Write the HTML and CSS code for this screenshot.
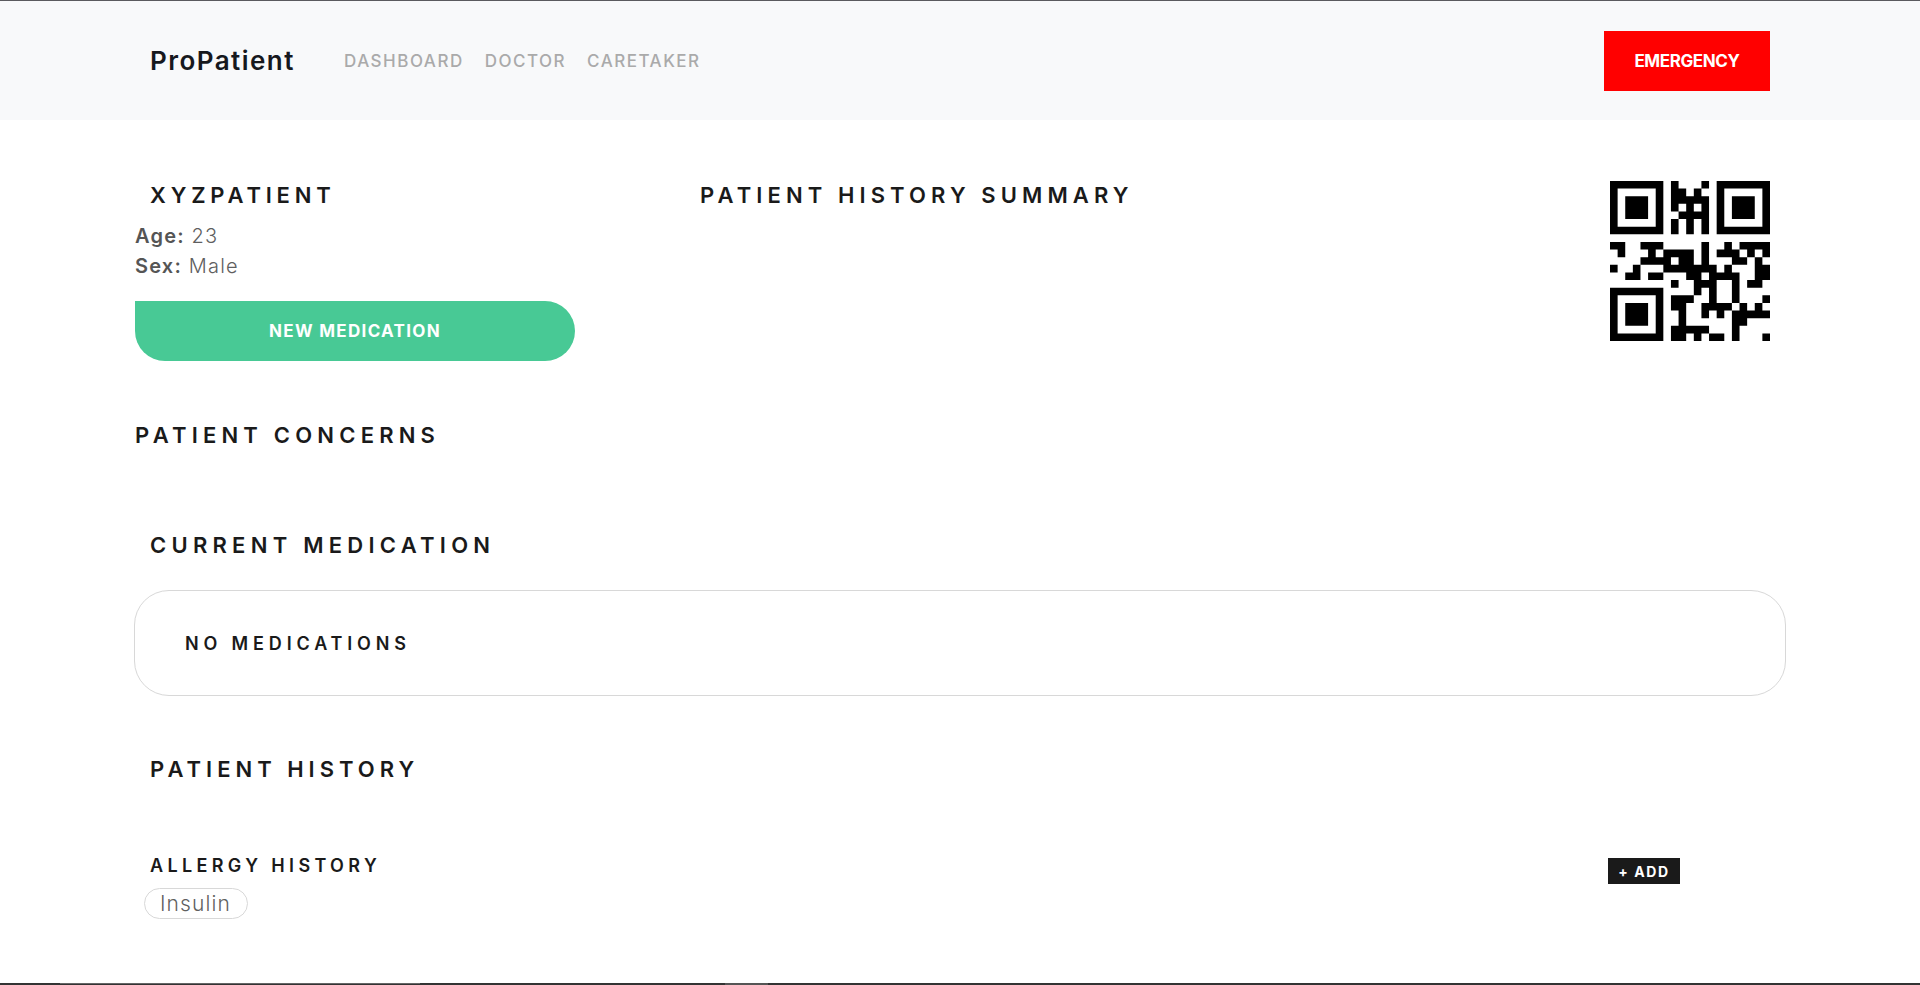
FILE: index.html
```html
<!DOCTYPE html>
<html lang="en">
<head>
<meta charset="utf-8">
<title>ProPatient</title>
<link rel="stylesheet" href="styles.css">
</head>
<body>
<header class="navbar">
  <a class="brand" href="#">ProPatient</a>
  <nav class="nav-links">
    <a class="nav-link" href="#">DASHBOARD</a>
    <a class="nav-link" href="#">DOCTOR</a>
    <a class="nav-link" href="#">CARETAKER</a>
  </nav>
  <button class="btn-emergency">EMERGENCY</button>
</header>
<main class="content">
  <section class="top-row">
    <div class="patient-col">
      <h2 class="heading inset heading-name">XYZPATIENT</h2>
      <p class="fact"><strong>Age:</strong> 23</p>
      <p class="fact"><strong>Sex:</strong> Male</p>
      <button class="btn-new">NEW MEDICATION</button>
      <h2 class="heading heading-concerns">PATIENT CONCERNS</h2>
    </div>
    <h2 class="heading heading-summary">PATIENT HISTORY SUMMARY</h2>
    <svg class="qr" viewBox="0 0 21 21" width="160" height="160" role="img" aria-label="QR code">
      <path fill-rule="evenodd" d="M0 0h7v7h-7zM1 1h5v5h-5zM2 2h3v3h-3zM14 0h7v7h-7zM15 1h5v5h-5zM16 2h3v3h-3zM0 14h7v7h-7zM1 15h5v5h-5zM2 16h3v3h-3z"/>
      <path d="M8 0h1v1h-1zM12 0h1v1h-1zM8 1h2v1h-2zM11 1h1v1h-1zM8 2h5v1h-5zM8 3h1v1h-1zM10 3h1v1h-1zM12 3h1v1h-1zM9 4h4v1h-4zM8 5h1v1h-1zM10 5h1v1h-1zM12 5h1v1h-1zM8 6h1v1h-1zM10 6h1v1h-1zM12 6h1v1h-1zM0 8h2v1h-2zM4 8h3v1h-3zM12 8h1v1h-1zM15 8h1v1h-1zM17 8h4v1h-4zM1 9h1v1h-1zM5 9h1v1h-1zM7 9h4v1h-4zM12 9h1v1h-1zM14 9h3v1h-3zM18 9h1v1h-1zM20 9h1v1h-1zM4 10h4v1h-4zM9 10h2v1h-2zM12 10h1v1h-1zM16 10h2v1h-2zM19 10h1v1h-1zM0 11h1v1h-1zM3 11h1v1h-1zM7 11h7v1h-7zM15 11h1v1h-1zM19 11h2v1h-2zM2 12h2v1h-2zM5 12h2v1h-2zM10 12h2v1h-2zM13 12h4v1h-4zM19 12h2v1h-2zM8 13h1v1h-1zM11 13h3v1h-3zM16 13h1v1h-1zM18 13h2v1h-2zM11 14h1v1h-1zM13 14h1v1h-1zM16 14h1v1h-1zM8 15h3v1h-3zM13 15h1v1h-1zM16 15h1v1h-1zM20 15h1v1h-1zM8 16h2v1h-2zM12 16h4v1h-4zM17 16h1v1h-1zM19 16h1v1h-1zM9 17h1v1h-1zM12 17h1v1h-1zM14 17h1v1h-1zM16 17h5v1h-5zM9 18h1v1h-1zM16 18h2v1h-2zM8 19h5v1h-5zM16 19h1v1h-1zM8 20h2v1h-2zM11 20h1v1h-1zM13 20h2v1h-2zM16 20h1v1h-1zM20 20h1v1h-1z"/>
    </svg>
  </section>

  <h2 class="heading inset heading-current">CURRENT MEDICATION</h2>
  <div class="med-card">
    <span class="med-empty">NO MEDICATIONS</span>
  </div>

  <h2 class="heading inset heading-history">PATIENT HISTORY</h2>
  <div class="history-row">
    <h3 class="subheading">ALLERGY HISTORY</h3>
    <button class="btn-add">+ ADD</button>
  </div>
  <div class="pills"><span class="pill">Insulin</span></div>
</main>
<div class="strip">
  <span class="strip-window"></span>
  <span class="strip-tab"></span>
</div>
</body>
</html>
```

FILE: styles.css
```css
* { box-sizing: border-box; }

html, body { height: 100%; }

body {
  margin: 0;
  display: flex;
  flex-direction: column;
  overflow: hidden;
  background: #fff;
  color: #1a1a1a;
  font-family: Inter, "Liberation Sans", sans-serif;
}

.navbar {
  flex: none;
  height: 120px;
  display: flex;
  align-items: center;
  padding: 0 150px;
  background: #f8f9fa;
  border-top: 1px solid #5a5a5e;
}

.brand {
  width: 194px;
  color: #16181d;
  font-size: 26px;
  font-weight: 600;
  letter-spacing: 1.45px;
  text-decoration: none;
}

.nav-links { display: flex; gap: 21px; }

.nav-link {
  color: #aaa;
  font-size: 17px;
  font-weight: 500;
  letter-spacing: 1.5px;
  text-decoration: none;
}

.btn-emergency {
  width: 166px;
  height: 60px;
  margin-left: auto;
  padding: 0;
  border: 0;
  background: #f00;
  color: #fff;
  font: 700 17px Inter, "Liberation Sans", sans-serif;
  letter-spacing: -0.4px;
}

.content { flex: 1; min-height: 0; padding: 0 134px; }

.top-row { display: flex; align-items: flex-start; padding-top: 60px; }

.patient-col { flex: none; width: 566px; padding-left: 1px; }

.heading {
  margin: 0;
  font-size: 22px;
  line-height: 30px;
  font-weight: 600;
  letter-spacing: 5px;
  color: #1a1a1a;
}

.inset { padding-left: 16px; }

.heading-name { padding-left: 15px; letter-spacing: 4.8px; }

.heading-summary { flex: 1; letter-spacing: 5.1px; }

.qr { flex: none; display: block; margin: 1px 16px 0 0; }

.fact {
  margin: 0;
  color: #5f5f5f;
  font-size: 20px;
  line-height: 30px;
  font-weight: 300;
  letter-spacing: 1.2px;
}

.heading-name + .fact { margin-top: 11px; }

.fact strong { color: #555; font-weight: 600; }

.btn-new {
  display: block;
  width: 440px;
  height: 60px;
  margin-top: 20px;
  padding: 0;
  border: 0;
  border-radius: 0 30px 30px 30px;
  background: #48c995;
  color: #fff;
  font: 700 17px Inter, "Liberation Sans", sans-serif;
  letter-spacing: 1.3px;
}

.heading-concerns { margin-top: 59px; letter-spacing: 5.2px; }

.heading-current { margin-top: 80px; letter-spacing: 5.25px; }

.med-card {
  display: flex;
  align-items: center;
  height: 106px;
  margin-top: 30px;
  padding-left: 50px;
  border: 1px solid #d8d8d8;
  border-radius: 35px;
}

.med-empty {
  font-size: 18px;
  font-weight: 600;
  letter-spacing: 4.85px;
}

.heading-history { margin-top: 58px; }

.history-row {
  display: flex;
  justify-content: space-between;
  align-items: flex-start;
  margin-top: 67px;
  padding: 0 106px 0 16px;
}

.subheading {
  margin: 0;
  font-size: 18px;
  line-height: 30px;
  font-weight: 600;
  letter-spacing: 4.35px;
}

.btn-add {
  width: 72px;
  height: 26px;
  margin-top: 7px;
  padding: 0;
  border: 0;
  background: #1a1a1a;
  color: #fff;
  font: 700 14px Inter, "Liberation Sans", sans-serif;
  letter-spacing: 1.6px;
}

.pills { margin-top: 4px; padding-left: 10px; display: flex; }

.pill {
  display: flex;
  align-items: center;
  height: 31px;
  padding: 0 16px 0 15px;
  border: 1px solid #d8d8d8;
  border-radius: 16px;
  color: #5f5f5f;
  font-size: 21px;
  font-weight: 300;
  letter-spacing: 1.1px;
}

.strip {
  flex: none;
  position: relative;
  height: 2px;
  background: #333;
}

.strip-window {
  position: absolute;
  top: 0;
  left: 60px;
  width: 360px;
  height: 2px;
  border-top: 1px solid #666;
}

.strip-tab {
  position: absolute;
  top: 0;
  left: 725px;
  width: 43px;
  height: 2px;
  background: #555;
}
```
